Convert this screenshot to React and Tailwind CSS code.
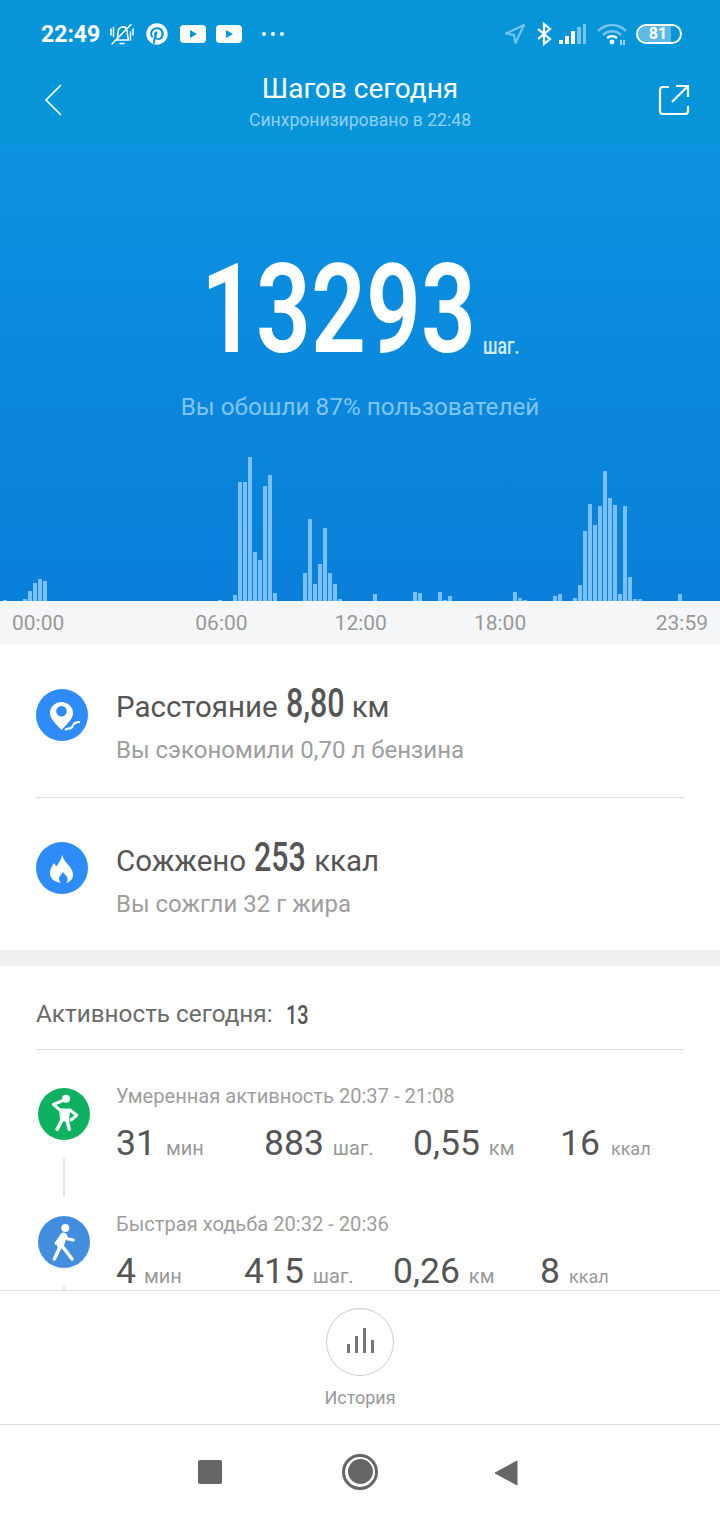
import { FaPinterest } from "react-icons/fa";

const font = "font-['Roboto','Noto_Sans',sans-serif]";

// [start x of the bar, height]
const bars = [
  [3, 1], [23, 2], [28, 10], [33, 18], [38, 22], [43, 20], [218, 1], [233, 6],
  [238, 119], [243, 119], [248, 144], [253, 49], [258, 41], [263, 115], [268, 126], [273, 8],
  [303, 28], [308, 82], [313, 17], [318, 37], [323, 73], [328, 28], [333, 17], [338, 2],
  [373, 7], [413, 9], [418, 8], [438, 9], [443, 1], [448, 5], [513, 9], [518, 3], [523, 1],
  [553, 5], [558, 7], [573, 3], [578, 16], [583, 70], [588, 97], [593, 76], [598, 95],
  [603, 130], [608, 103], [613, 96], [618, 7], [623, 95], [628, 24], [633, 2], [638, 2], [678, 7],
];

const slots = Array.from({ length: 143 }, (_, i) => {
  const hit = bars.find((b) => b[0] === 3 + i * 5);
  return hit ? hit[1] : 0;
});

function YouTubeIcon() {
  return (
    <svg width="26" height="18" viewBox="0 0 26 18">
      <rect width="26" height="18" rx="4" fill="#fff" />
      <path d="M10 5l7 4-7 4z" fill="#0a95da" />
    </svg>
  );
}

function StatusBar() {
  return (
    <div className="flex h-[66px] items-center justify-between pl-[41px] pr-[38px] pt-[2px]">
      <div className="flex items-center">
        <span className="w-[59px] text-[23px] font-bold leading-none text-white">22:49</span>
        <svg width="24" height="24" viewBox="0 0 24 24" fill="none" stroke="#fff" strokeWidth="1.500" strokeLinecap="round" className="ml-[10px]">
          <path d="M6.500 18c1.500-2 1.500-4 1.500-7 0-3 1.800-5.500 4-6 2.500-.5 4.500 1 5 3.500.5 3 .5 6 1.500 9.500z" />
          <path d="M10 21.500h4M2 22L21 2.500M1 7v6M3.500 5.500v9M23 7v6M20.500 10v8" />
        </svg>
        <FaPinterest size={22} color="#fff" className="ml-[12px]" />
        <span className="ml-[12px]"><YouTubeIcon /></span>
        <span className="ml-[10px]"><YouTubeIcon /></span>
        <div className="ml-[20px] flex gap-[5px]">
          <span className="size-[4px] rounded-full bg-white" />
          <span className="size-[4px] rounded-full bg-white" />
          <span className="size-[4px] rounded-full bg-white" />
        </div>
      </div>
      <div className="flex items-center">
        <svg width="22" height="22" viewBox="0 0 22 22" fill="none" stroke="#fff" strokeOpacity="0.45" strokeWidth="2">
          <path d="M20 2L2 10.500l8 1.500 1.500 8z" strokeLinejoin="round" />
        </svg>
        <svg width="16" height="24" viewBox="0 0 16 24" fill="none" stroke="#fff" strokeWidth="2.200" className="ml-[10px]">
          <path d="M2 7l12 10-6 5V2l6 5L2 17" />
        </svg>
        <svg width="28" height="20" viewBox="0 0 28 20" className="ml-[7px]">
          <rect x="0" y="16" width="4" height="4" fill="#fff" />
          <rect x="6" y="12" width="4" height="8" fill="#fff" />
          <rect x="12" y="7" width="4" height="13" fill="#fff" />
          <rect x="18" y="3" width="4" height="17" fill="#fff" fillOpacity="0.45" />
          <rect x="24" y="0" width="3" height="20" fill="#fff" fillOpacity="0.45" />
        </svg>
        <svg width="30" height="24" viewBox="0 0 30 24" fill="none" strokeWidth="2.400" className="ml-[10px]">
          <path d="M1 9c8-8 20-8 28 0" stroke="#fff" strokeOpacity="0.45" />
          <path d="M6 13c5-5 13-5 18 0" stroke="#fff" strokeOpacity="0.45" />
          <path d="M10 16c3-2.500 7-2.500 10 0" stroke="#fff" />
          <circle cx="15" cy="20" r="2.400" fill="#fff" stroke="none" />
          <path d="M24 18v5M27 18v5" stroke="#fff" strokeWidth="1.200" />
        </svg>
        <div className="relative ml-[9px] flex h-[20px] w-[46px] items-center overflow-hidden rounded-full border-2 border-white">
          <div className="h-full w-[33px] bg-white/35" />
          <span className="absolute inset-x-0 pr-[2px] text-center text-[16px] font-bold leading-none text-white">81</span>
        </div>
      </div>
    </div>
  );
}

function Header() {
  return (
    <div className="relative h-[79px] text-center">
      <div className="h-[39px] pt-[7px] text-[28px] leading-[32px] text-white">Шагов сегодня</div>
      <div className="mt-[5px] text-[17.600px] leading-[20px] text-[#8fd0f5]">Синхронизировано в 22:48</div>
      <svg width="20" height="34" viewBox="0 0 20 34" fill="none" stroke="#fff" strokeWidth="1.600" className="absolute left-[44px] top-[17px]">
        <path d="M17 2L2 17l15 15" />
      </svg>
      <svg width="32" height="32" viewBox="0 0 32 32" fill="none" stroke="#fff" strokeWidth="2.200" className="absolute right-[30px] top-[18px]">
        <path d="M11 3H5a3 3 0 0 0-3 3v21a3 3 0 0 0 3 3h22a3 3 0 0 0 3-3v-5" />
        <path d="M14 18L29 3M18 2h12v11" />
      </svg>
    </div>
  );
}

function Hero() {
  return (
    <div className="h-[456px] bg-gradient-to-b from-[#0c93e1] to-[#0a7fd9]">
      <div className="flex h-[240px] items-end justify-center">
        <div className="flex items-end">
          <div className="h-[150px] w-[268px]">
            <div className="w-[360px] origin-top-left scale-x-[0.77] text-[125px] font-semibold leading-[150px] text-white">13293</div>
          </div>
          <div className="mb-[25px] ml-[14px] w-[37px] text-[24px] font-medium leading-[28px] text-[#cfeafc]">
            <span className="inline-block w-[50px] origin-left scale-x-[0.74]">шаг.</span>
          </div>
        </div>
      </div>
      <div className="mt-[9px] text-center text-[24.300px] leading-[26px] text-[#80c5f2]">Вы обошли 87% пользователей</div>
      <div className="mt-[26px] flex h-[155px] items-end gap-[1px] pl-[3px]">
        {slots.map((h, i) => (
          <div key={i} className="w-[4px] shrink-0 bg-[#79c0f7]" style={{ height: h }} />
        ))}
      </div>
    </div>
  );
}

function TimeAxis() {
  return (
    <div className="flex h-[44px] items-center bg-[#f5f6f8] px-[12px] text-[21px] leading-none text-[#999]">
      <span>00:00</span>
      <span className="ml-[131px]">06:00</span>
      <span className="ml-[87px]">12:00</span>
      <span className="ml-[87px]">18:00</span>
      <span className="ml-auto">23:59</span>
    </div>
  );
}

function Condensed({ w, children, className }) {
  return (
    <span className={`inline-block overflow-visible font-medium ${className}`} style={{ width: w }}>
      <span className="inline-block origin-left scale-x-[0.76] whitespace-nowrap">{children}</span>
    </span>
  );
}

function SummaryRow({ icon, iconTop, label, value, valueWidth, unit, sub }) {
  return (
    <div className="flex items-start">
      <div className={`flex size-[52px] shrink-0 items-center justify-center rounded-full bg-[#2d8cf8] ${iconTop}`}>{icon}</div>
      <div className="ml-[28px]">
        <div className="flex items-baseline text-[29.500px] leading-[36px] text-[#555]">
          <span>{label}</span>
          <Condensed w={valueWidth} className="ml-[8px] text-[40px] leading-[36px]">{value}</Condensed>
          <span className="ml-[10px]">{unit}</span>
        </div>
        <div className="mt-[11px] text-[24px] leading-[28px] text-[#9e9e9e]">{sub}</div>
      </div>
    </div>
  );
}

function PinIcon() {
  return (
    <svg width="38" height="38" viewBox="0 0 38 38" fill="none">
      <path fillRule="evenodd" d="M18.500 6C25 6 30 11 30 17c0 6-6 11-11.500 17C13 28 7 23 7 17 7 11 12 6 18.500 6zm0 4a5.300 5.300 0 1 0 0 10.600 5.300 5.300 0 0 0 0-10.600z" fill="#fff" />
      <path d="M22 34c2-2 4-1 6-2s2-4 4-5 3-1 5-1" stroke="#fff" strokeWidth="2" />
    </svg>
  );
}

function FlameIcon() {
  return (
    <svg width="52" height="52" viewBox="0 0 52 52">
      <path d="M26 12c1 6 5 9 8 13 2 3 3 5 3 8 0 4-3 7-7 8 2-2 2-4 1-6-1-2-3-3-4-5-1 2-4 4-4 7 0 2 1 3 2 4-6-1-11-4-11-10 0-4 2-7 4-10 1 2 2 3 3 3 2-4 5-7 5-12z" fill="#fff" />
    </svg>
  );
}

function StretchIcon() {
  return (
    <svg width="52" height="52" viewBox="0 0 52 52" fill="none" stroke="#fff" strokeLinecap="round" strokeLinejoin="round">
      <circle cx="28" cy="10.700" r="4" fill="#fff" stroke="none" />
      <path d="M24 13l-8.700 3.300L22 22M32 22l6.700 5.300L33 32" strokeWidth="3" />
      <path d="M22 21h9.500l-1 12h-7.500z" fill="#fff" strokeWidth="1" />
      <path d="M24 32l-5 9.300M29 32l2.300 9.300" strokeWidth="3.500" />
    </svg>
  );
}

function WalkIcon() {
  return (
    <svg width="52" height="52" viewBox="0 0 52 52" fill="none" stroke="#fff" strokeLinecap="round" strokeLinejoin="round">
      <circle cx="27.300" cy="12" r="4" fill="#fff" stroke="none" />
      <path d="M24 19l-6 8.300M27 20l3 3 5.300 1" strokeWidth="3" />
      <path d="M25.500 20l-3 9" strokeWidth="7" />
      <path d="M22 31l-5.700 12M24 30l4 5 6 8" strokeWidth="3.500" />
    </svg>
  );
}

function Stat({ value, unit, gap, w, unitSize }) {
  return (
    <div className="flex items-baseline" style={{ width: w }}>
      <span className="text-[35.500px] leading-[40px] text-[#555]">{value}</span>
      <span className="leading-[40px] text-[#999]" style={{ marginLeft: gap, fontSize: unitSize || 20 }}>{unit}</span>
    </div>
  );
}

function ActivityRow({ color, icon, title, stats }) {
  return (
    <div className="flex h-[128px]">
      <div className="flex w-[56px] shrink-0 flex-col items-center pt-[4px]">
        <div className="flex size-[52px] items-center justify-center rounded-full" style={{ backgroundColor: color }}>{icon}</div>
        <div className="mt-[18px] h-[39px] w-[2px] bg-[#e6e6e6]" />
      </div>
      <div className="ml-[24px]">
        <div className="h-[24px] text-[20.100px] leading-[24px] text-[#9e9e9e]">{title}</div>
        <div className="mt-[15px] flex">
          {stats.map((s) => (
            <Stat key={s.unit} {...s} />
          ))}
        </div>
      </div>
    </div>
  );
}

function Content() {
  return (
    <div className="min-h-0 flex-1 overflow-hidden bg-white">
      <div className="px-[36px]">
        <div className="pt-[41px]">
          <SummaryRow
            icon={<PinIcon />}
            iconTop="mt-[3px]"
            label="Расстояние"
            value="8,80"
            valueWidth={56}
            unit="км"
            sub="Вы сэкономили 0,70 л бензина"
          />
        </div>
        <div className="mt-[33px] h-px bg-[#ddd]" />
        <div className="pt-[42px]">
          <SummaryRow
            icon={<FlameIcon />}
            iconTop="mt-[2px]"
            label="Сожжено"
            value="253"
            valueWidth={50}
            unit="ккал"
            sub="Вы сожгли 32 г жира"
          />
        </div>
      </div>
      <div className="mt-[32px] h-[16px] bg-[#eef0f1]" />
      <div className="px-[36px]">
        <div className="flex h-[84px] items-center border-b border-[#ddd] pt-[14px] text-[24.300px] leading-none text-[#6b6b6b]">
          <span>Активность сегодня:</span>
          <Condensed w={22} className="ml-[13px] text-[26px] text-[#555]">13</Condensed>
        </div>
        <div className="pt-[34px]">
          <ActivityRow
            color="#0eb160"
            icon={<StretchIcon />}
            title="Умеренная активность 20:37 - 21:08"
            stats={[
              { value: "31", unit: "мин", gap: 10, w: 148 },
              { value: "883", unit: "шаг.", gap: 9, w: 149 },
              { value: "0,55", unit: "км", gap: 9, w: 147 },
              { value: "16", unit: "ккал", gap: 11, w: 100, unitSize: 18 },
            ]}
          />
          <ActivityRow
            color="#418ede"
            icon={<WalkIcon />}
            title="Быстрая ходьба 20:32 - 20:36"
            stats={[
              { value: "4", unit: "мин", gap: 8, w: 128 },
              { value: "415", unit: "шаг.", gap: 9, w: 149 },
              { value: "0,26", unit: "км", gap: 9, w: 147 },
              { value: "8", unit: "ккал", gap: 9, w: 100, unitSize: 18 },
            ]}
          />
        </div>
      </div>
    </div>
  );
}

function HistoryBar() {
  return (
    <div className="flex h-[135px] flex-col items-center border-y border-[#ddd] bg-white pt-[17px]">
      <div className="flex size-[68px] items-center justify-center rounded-full border border-[#ccc]">
        <svg width="27" height="25" viewBox="0 0 27 25" fill="#777" className="mb-[3px]">
          <rect x="0" y="16" width="3" height="9" />
          <rect x="8" y="8" width="3" height="17" />
          <rect x="16" y="0" width="3" height="25" />
          <rect x="24" y="12" width="3" height="13" />
        </svg>
      </div>
      <div className="mt-[10px] text-[18px] leading-[24px] text-[#999]">История</div>
    </div>
  );
}

function NavBar() {
  return (
    <div className="relative flex h-[95px] items-center justify-center bg-white">
      <div className="absolute left-[198px] top-[35px] size-[24px] rounded-[2px] bg-[#666]" />
      <div className="mt-[-2px] flex size-[36px] items-center justify-center rounded-full border-[3px] border-[#666]">
        <div className="size-[25px] rounded-full bg-[#666]" />
      </div>
      <svg width="24" height="26" viewBox="0 0 24 26" className="absolute left-[494px] top-[35px]">
        <path d="M23 1v24L1 13z" fill="#666" stroke="#666" strokeLinejoin="round" />
      </svg>
    </div>
  );
}

export default function App() {
  return (
    <div className={`flex h-[1520px] w-[720px] flex-col overflow-hidden bg-white ${font}`}>
      <div className="bg-[#0795da]">
        <StatusBar />
        <Header />
      </div>
      <Hero />
      <TimeAxis />
      <Content />
      <HistoryBar />
      <NavBar />
    </div>
  );
}
